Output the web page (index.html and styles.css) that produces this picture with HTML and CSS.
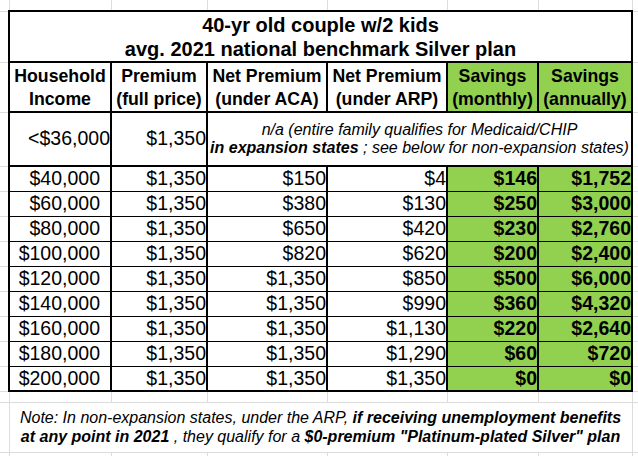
FILE: index.html
```html
<!DOCTYPE html>
<html lang="en">
<head>
<meta charset="utf-8">
<title>ACA vs ARP premiums</title>
<link rel="stylesheet" href="styles.css">
</head>
<body>
<table class="sheet">
  <colgroup>
    <col class="c-gut"><col class="c-a"><col class="c-b"><col class="c-c"><col class="c-d"><col class="c-e"><col class="c-f"><col class="c-end">
  </colgroup>
  <tr class="r-top"><td class="gut"></td><td></td><td></td><td></td><td></td><td></td><td></td><td></td></tr>
  <tr class="r-title">
    <td class="gut"></td>
    <td colspan="6" class="t title">40-yr old couple w/2 kids<br>avg. 2021 national benchmark Silver plan</td>
    <td></td>
  </tr>
  <tr class="r-head">
    <td class="gut"></td>
    <th class="t">Household<br>Income</th>
    <th class="t">Premium<br>(full price)</th>
    <th class="t">Net Premium<br>(under ACA)</th>
    <th class="t">Net Premium<br>(under ARP)</th>
    <th class="t green">Savings<br>(monthly)</th>
    <th class="t green">Savings<br>(annually)</th>
    <td></td>
  </tr>
  <tr class="r-na">
    <td class="gut"></td>
    <td class="t num">&lt;$36,000</td>
    <td class="t num">$1,350</td>
    <td colspan="4" class="t na">n/a (entire family qualifies for Medicaid/CHIP<br><b>in expansion states</b> ; see below for non-expansion states)</td>
    <td></td>
  </tr>
  <tr class="r-data"><td class="gut"></td><td class="t num inc">$40,000</td><td class="t num">$1,350</td><td class="t num">$150</td><td class="t num">$4</td><td class="t num green b">$146</td><td class="t num green b">$1,752</td><td></td></tr>
  <tr class="r-data"><td class="gut"></td><td class="t num inc">$60,000</td><td class="t num">$1,350</td><td class="t num">$380</td><td class="t num">$130</td><td class="t num green b">$250</td><td class="t num green b">$3,000</td><td></td></tr>
  <tr class="r-data"><td class="gut"></td><td class="t num inc">$80,000</td><td class="t num">$1,350</td><td class="t num">$650</td><td class="t num">$420</td><td class="t num green b">$230</td><td class="t num green b">$2,760</td><td></td></tr>
  <tr class="r-data"><td class="gut"></td><td class="t num inc">$100,000</td><td class="t num">$1,350</td><td class="t num">$820</td><td class="t num">$620</td><td class="t num green b">$200</td><td class="t num green b">$2,400</td><td></td></tr>
  <tr class="r-data"><td class="gut"></td><td class="t num inc">$120,000</td><td class="t num">$1,350</td><td class="t num">$1,350</td><td class="t num">$850</td><td class="t num green b">$500</td><td class="t num green b">$6,000</td><td></td></tr>
  <tr class="r-data"><td class="gut"></td><td class="t num inc">$140,000</td><td class="t num">$1,350</td><td class="t num">$1,350</td><td class="t num">$990</td><td class="t num green b">$360</td><td class="t num green b">$4,320</td><td></td></tr>
  <tr class="r-data"><td class="gut"></td><td class="t num inc">$160,000</td><td class="t num">$1,350</td><td class="t num">$1,350</td><td class="t num">$1,130</td><td class="t num green b">$220</td><td class="t num green b">$2,640</td><td></td></tr>
  <tr class="r-data"><td class="gut"></td><td class="t num inc">$180,000</td><td class="t num">$1,350</td><td class="t num">$1,350</td><td class="t num">$1,290</td><td class="t num green b">$60</td><td class="t num green b">$720</td><td></td></tr>
  <tr class="r-data last"><td class="gut"></td><td class="t num inc">$200,000</td><td class="t num">$1,350</td><td class="t num">$1,350</td><td class="t num">$1,350</td><td class="t num green b">$0</td><td class="t num green b">$0</td><td></td></tr>
  <tr class="r-gap"><td class="gut"></td><td></td><td></td><td></td><td></td><td></td><td></td><td></td></tr>
  <tr class="r-note">
    <td class="gut"></td>
    <td colspan="6" class="note">Note: In non-expansion states, under the ARP, <b>if receiving unemployment benefits</b><br><b>at any point in 2021</b> , they qualify for a <b>$0-premium "Platinum-plated Silver" plan</b></td>
    <td></td>
  </tr>
  <tr class="r-bot"><td class="gut"></td><td></td><td></td><td></td><td></td><td></td><td></td><td></td></tr>
</table>
</body>
</html>
```

FILE: styles.css
```css
html, body {
  margin: 0;
  padding: 0;
  background: #fff;
  overflow: hidden;
}

.sheet {
  border-collapse: collapse;
  table-layout: fixed;
  width: 638px;
  font-family: "Liberation Sans", Arial, sans-serif;
  color: #000;
}

.c-gut { width: 9px; }
.c-a { width: 102px; }
.c-b { width: 96px; }
.c-c { width: 120px; }
.c-d { width: 120px; }
.c-e { width: 91px; }
.c-f { width: 94px; }
.c-end { width: 6px; }

.sheet td,
.sheet th {
  border: 1px solid #dcdcdc;
  padding: 0;
  overflow: hidden;
  white-space: nowrap;
}

.sheet .gut { border-left: none; }
.r-top td { border-top: none; }

.r-top { height: 11px; }
.r-title { height: 51px; }
.r-head { height: 50px; }
.r-na { height: 54px; }
.r-data { height: 25px; }
.r-gap { height: 11px; }
.r-note { height: 50px; }
.r-bot { height: 20px; }

.sheet .t {
  border: 2px solid #000;
}

.r-data .t {
  border-top-width: 1px;
  border-bottom-width: 1px;
}

.r-data.last .t {
  border-bottom-width: 2px;
}

.title {
  font-size: 20px;
  font-weight: 700;
  line-height: 24px;
  text-align: center;
  vertical-align: middle;
  padding-top: 3px;
}

.r-head th {
  font-size: 17.7px;
  font-weight: 700;
  line-height: 23px;
  text-align: center;
  vertical-align: middle;
  padding-top: 2px;
}

.green {
  background: #92d050;
}

.num {
  font-size: 19.5px;
  line-height: 1;
  text-align: right;
  vertical-align: middle;
  padding-right: 4px;
}

.num.inc {
  padding-right: 10px;
}

.num.b {
  font-weight: 700;
}

.na {
  font-size: 16px;
  font-style: italic;
  line-height: 18.5px;
  text-align: center;
  vertical-align: middle;
  padding-top: 4px;
}

.note {
  font-size: 16px;
  font-style: italic;
  line-height: 19.5px;
  text-align: center;
  vertical-align: middle;
}
```
